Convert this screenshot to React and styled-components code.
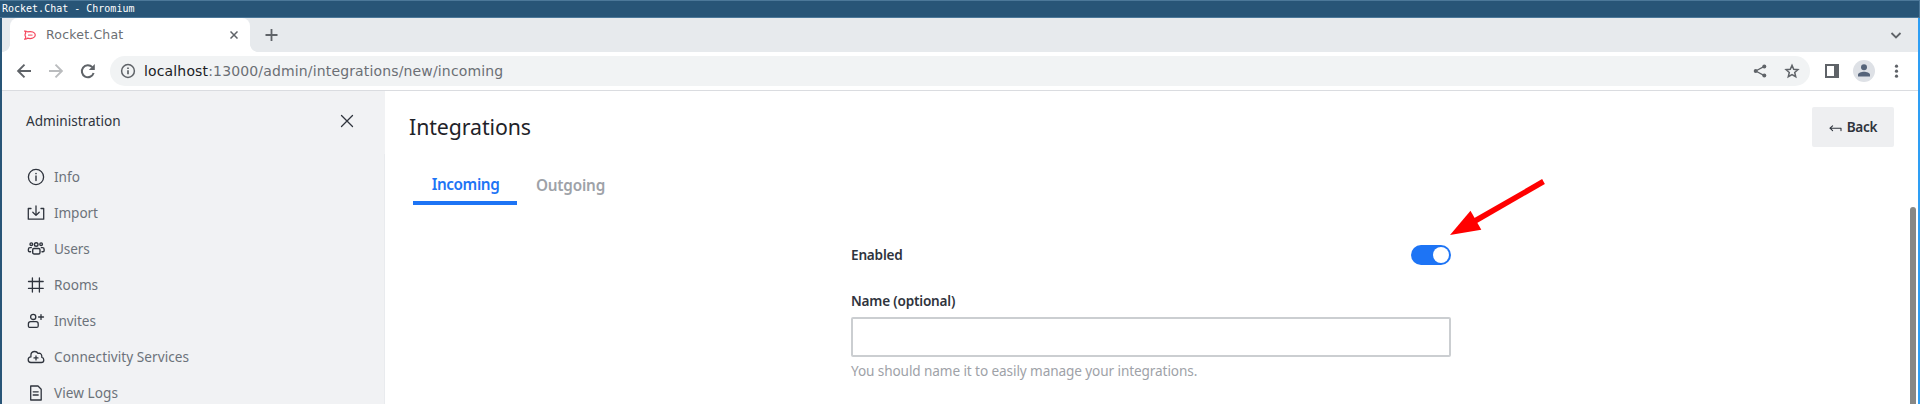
import React from "react";
import styled, { createGlobalStyle } from "styled-components";

const Global = createGlobalStyle`
  * { box-sizing: border-box; }
  html, body { margin: 0; height: 100%; overflow: hidden; background: #fff; }
  button { font: inherit; border: 0; padding: 0; background: none; }
  svg { display: block; flex: none; }
`;

const Window = styled.div`
  display: flex;
  flex-direction: column;
  height: 404px;
  width: 1920px;
  font-family: "Noto Sans", sans-serif;
  overflow: hidden;
`;

const TitleBar = styled.header`
  height: 18px;
  flex: none;
  padding-left: 2px;
  background: #285577;
  border: 1px solid #4c7899;
  border-left-width: 0;
  color: #fff;
  font: 10px/15px "DejaVu Sans Mono", monospace;
  white-space: pre;
`;

const Frame = styled.div`
  flex: 1;
  min-height: 0;
  display: flex;
  flex-direction: column;
  border-left: 2px solid #285577;
  border-right: 2px solid #2e9ef4;
`;

const TabStrip = styled.div`
  height: 34px;
  flex: none;
  display: flex;
  align-items: center;
  background: #e7eaed;
  padding: 0 15px 0 8px;
`;

const BrowserTab = styled.div`
  position: relative;
  width: 240px;
  height: 34px;
  display: flex;
  align-items: center;
  padding: 0 12px 0 14px;
  background: #fff;
  border-radius: 8px 8px 0 0;
  color: #6b6f74;
  font: 12.5px/34px "DejaVu Sans", sans-serif;
  &::before, &::after {
    content: "";
    position: absolute;
    bottom: 0;
    width: 8px;
    height: 8px;
  }
  &::before { left: -8px; background: radial-gradient(circle at 0 0, transparent 7.6px, #fff 8.2px); }
  &::after { right: -8px; background: radial-gradient(circle at 100% 0, transparent 7.6px, #fff 8.2px); }
`;

const TabTitle = styled.span`
  flex: 1;
  margin-left: 10px;
  letter-spacing: 0.2px;
`;

const NewTab = styled.button`
  margin-left: 15px;
`;

const Spacer = styled.div`
  flex: 1;
`;

const Toolbar = styled.div`
  height: 39px;
  flex: none;
  display: flex;
  align-items: center;
  padding: 0 15px 1px 12px;
  border-bottom: 1px solid #dadce0;
`;

const NavButtons = styled.div`
  display: flex;
  gap: 12px;
  margin-right: 12px;
`;

const AddressBar = styled.div`
  width: 1700px;
  height: 30px;
  display: flex;
  align-items: center;
  padding: 0 8px 0 8px;
  border-radius: 15px;
  background: #f1f3f4;
`;

const Url = styled.span`
  flex: 1;
  margin-left: 6px;
  color: #6b6f74;
  font: 14px/30px "DejaVu Sans", sans-serif;
  letter-spacing: 0.15px;
  b { font-weight: 400; color: #202124; }
`;

const AddressActions = styled.div`
  display: flex;
  gap: 12px;
`;

const Avatar = styled.div`
  width: 22px;
  height: 22px;
  margin: 0 14px;
  border-radius: 50%;
  background: #dee1e6;
  display: flex;
  align-items: center;
  justify-content: center;
`;

const Page = styled.div`
  flex: 1;
  min-height: 0;
  display: flex;
`;

const Sidebar = styled.aside`
  width: 383px;
  flex: none;
  background: #f1f2f4;
  display: flex;
  flex-direction: column;
`;

const SidebarHeader = styled.div`
  height: 63px;
  flex: none;
  display: flex;
  align-items: flex-start;
  justify-content: space-between;
  padding: 20px 30px 0 24px;
  color: #2f343d;
  font-size: 13.6px;
  line-height: 20px;
  svg { margin-top: 2px; }
`;

const Nav = styled.nav`
  flex: 1;
  padding-top: 5px;
  border-right: 1px solid #e9ebee;
`;

const NavItem = styled.a`
  height: 36px;
  display: flex;
  align-items: center;
  gap: 8px;
  padding-left: 24px;
  color: #6c727a;
  font-size: 13.6px;
  line-height: 20px;
  letter-spacing: ${(p) => p.$tracking || 0}px;
  svg { color: #2f343d; }
`;

const Main = styled.main`
  flex: 1;
  min-width: 0;
  display: flex;
  flex-direction: column;
`;

const MainHeader = styled.div`
  height: 72px;
  flex: none;
  display: flex;
  align-items: center;
  justify-content: space-between;
  padding: 0 24px;
`;

const Heading = styled.h1`
  margin: 0;
  color: #1f2329;
  font-size: 21.3px;
  font-weight: 400;
  line-height: 32px;
  letter-spacing: -0.08px;
`;

const BackButton = styled.button`
  width: 82px;
  height: 40px;
  display: flex;
  align-items: center;
  justify-content: center;
  gap: 5px;
  padding-bottom: 1px;
  border-radius: 2px;
  background: #eeeff1;
  color: #2f343d;
  font-size: 13.6px;
  font-weight: 600;
  letter-spacing: -0.25px;
  svg { margin-top: 2px; }
`;

const Tabs = styled.div`
  display: flex;
  height: 42px;
  flex: none;
  padding-left: 28px;
`;

const Tab = styled.button`
  width: ${(p) => p.$width}px;
  height: 42px;
  padding-top: ${(p) => (p.$active ? 4 : 2)}px;
  padding-left: 1px;
  border-bottom: ${(p) => (p.$active ? "4px solid #1d74f5" : "0")};
  color: ${(p) => (p.$active ? "#1d74f5" : "#9ea2a8")};
  font-size: 15.3px;
  font-weight: 600;
  letter-spacing: ${(p) => p.$tracking}px;
`;

const Body = styled.div`
  flex: 1;
  min-height: 0;
  display: flex;
  justify-content: space-between;
  align-items: stretch;
  padding: 2px 2px 0 466px;
`;

const Form = styled.form`
  width: 600px;
  padding-top: 38px;
`;

const FieldRow = styled.div`
  display: flex;
  align-items: center;
  justify-content: space-between;
  height: 20px;
  margin-bottom: 26px;
`;

const Label = styled.label`
  display: block;
  color: #2f343d;
  font-size: 13.6px;
  font-weight: 600;
  line-height: 20px;
  letter-spacing: ${(p) => p.$tracking}px;
`;

const Toggle = styled.span`
  width: 40px;
  height: 20px;
  padding: 2px;
  display: flex;
  justify-content: flex-end;
  border-radius: 10px;
  background: #1d74f5;
  &::after {
    content: "";
    width: 16px;
    height: 16px;
    border-radius: 50%;
    background: #fff;
  }
`;

const Input = styled.input`
  display: block;
  width: 600px;
  height: 40px;
  margin-top: 6px;
  border: 2px solid #cbced1;
  border-radius: 2px;
  background: #fff;
`;

const Hint = styled.div`
  padding: 4px 0 0;
  color: #9ea2a8;
  font-size: 13.6px;
  line-height: 20px;
  letter-spacing: -0.1px;
`;

const ScrollThumb = styled.div`
  width: 6px;
  border-radius: 3px 3px 0 0;
  background: #878785;
`;

const Annotation = styled.svg`
  position: absolute;
  left: 1440px;
  top: 170px;
`;

const Icon = ({ size = 20, w = 1.3, children, ...rest }) => (
  <svg width={size} height={size} viewBox="0 0 20 20" fill="none" stroke="currentColor"
    strokeWidth={w} strokeLinecap="round" strokeLinejoin="round" {...rest}>{children}</svg>
);

const icons = {
  info: <Icon><circle cx="10" cy="10" r="7.6" /><path d="M10 9v4.6" strokeWidth="1.4" /><circle cx="10" cy="6.6" r=".8" fill="currentColor" stroke="none" /></Icon>,
  import: <Icon><path d="M5 5.5H2.3v10.7h15.4V5.5H15M10 3v9.2M6.8 9.2l3.2 3.2 3.2-3.2" /></Icon>,
  users: (
    <Icon w={1.4}>
      <circle cx="5.3" cy="5.2" r="1.3" /><circle cx="10.2" cy="5.5" r="1.8" /><circle cx="15.1" cy="5.2" r="1.3" />
      <path d="M7.8 9.5h5c.8 0 1.2.6 1.2 1.4v2.6c0 .9-.6 1.5-1.5 1.5H8.2c-.9 0-1.5-.6-1.5-1.5v-2.6c0-.8.4-1.4 1.1-1.4zM5.3 8.6H4c-1 0-1.6.7-1.6 1.6v1.5c0 .7.5 1.1 1.1 1.1h1.1M15.3 8.6h1.2c1 0 1.6.7 1.6 1.6v1.5c0 .7-.5 1.1-1.1 1.1h-1" />
    </Icon>
  ),
  rooms: <Icon><path d="M6.4 3v14M13.4 3v14M2.5 6.5h14.7M2.5 13.4h14.7" /></Icon>,
  invites: <Icon><circle cx="7.2" cy="5.9" r="2.6" /><path d="M4.6 10.7h5.6c1.2 0 2 1 2 2.2v2c0 .9-.6 1.5-1.5 1.5H3.9c-.9 0-1.5-.6-1.5-1.5v-2c0-1.2.9-2.2 2.2-2.2zM15 3.6v4.8M12.6 6h4.9" /></Icon>,
  cloud: <Icon><path d="M4.9 15.5h10.4c1.5 0 2.5-1.1 2.5-2.6 0-1.3-.8-2.3-2-2.5.3-2.4-.8-4-2.5-4.2-.5 0-.9.1-1.3.2C11.3 5.1 10.1 4.5 8.8 4.5c-2.3 0-3.9 1.7-3.9 3.9v1.5C3.3 10 2.2 11.1 2.2 12.7c0 1.6 1.1 2.8 2.7 2.8zM10 8.900v4M8 10.900h4" /></Icon>,
  logs: <Icon><path d="M4.700 3h7.300l3.200 3.200V17H4.700zM7.200 8.800h5M7.200 12h5" /></Icon>,
};

const entries = [
  ["info", "Info"], ["import", "Import", -0.1], ["users", "Users", -0.1], ["rooms", "Rooms"],
  ["invites", "Invites", -0.1], ["cloud", "Connectivity Services", 0.06], ["logs", "View Logs", 0.05],
];

export default function App() {
  return (
    <Window>
      <Global />
      <TitleBar>Rocket.Chat - Chromium</TitleBar>
      <Frame>
        <TabStrip>
          <BrowserTab>
            <svg width="12" height="12" viewBox="0 0 12 12" fill="none" stroke="#f5455c">
              <path d="M.7 2c1.300 0 2.200.3 2.900.9C7.300 1.900 11.300 3.200 11.300 6s-4 4.200-7.700 3.200C2.900 9.800 2 10.200.7 10.200c.8-.8 1.200-1.500 1-2.300C.9 6.800.9 5.300 1.700 4.200 1.900 3.400 1.500 2.700.7 2z" strokeWidth="1.200" />
              <path d="M4 6.100h4.500" strokeWidth="1" />
            </svg>
            <TabTitle>Rocket.Chat</TabTitle>
            <svg width="8" height="8" viewBox="0 0 8 8" stroke="#5f6368" strokeWidth="1.500"><path d="M.5.500l7 7M7.500.5l-7 7" /></svg>
          </BrowserTab>
          <NewTab aria-label="New tab">
            <svg width="13" height="12" viewBox="0 0 13 12" stroke="#5f6368" strokeWidth="1.800"><path d="M.5 6h12M6.500 0v12" /></svg>
          </NewTab>
          <Spacer />
          <svg width="14" height="14" viewBox="0 0 14 14" fill="none" stroke="#5f6368" strokeWidth="1.800"><path d="M2.500 5L7 9.500 11.500 5" /></svg>
        </TabStrip>
        <Toolbar>
          <NavButtons>
            <Icon stroke="#5f6368" w={1.9} strokeLinecap="butt" strokeLinejoin="miter"><path d="M17 10H4.500M10.500 3.600L4.100 10l6.400 6.400" /></Icon>
            <Icon stroke="#babcbe" w={1.9} strokeLinecap="butt" strokeLinejoin="miter"><path d="M3 10h12.500M9.500 3.600l6.400 6.400-6.400 6.400" /></Icon>
            <Icon stroke="#5f6368" w={2} strokeLinecap="butt"><path d="M14.300 6.200A6 6 0 1 0 15.600 12" /><path d="M16.800 3v6h-6z" fill="#5f6368" stroke="none" /></Icon>
          </NavButtons>
          <AddressBar>
            <Icon stroke="#5f6368" w={1.5}><circle cx="10" cy="10" r="6.400" /><path d="M10 9.300v4M10 6.500v1.500" strokeLinecap="butt" strokeWidth="1.700" /></Icon>
            <Url><b>localhost</b>:13000/admin/integrations/new/incoming</Url>
            <AddressActions>
              <Icon stroke="#5f6368" w={1.3}><path d="M14.300 5.400L5.700 10l8.600 4.600" /><g fill="#5f6368" stroke="none"><circle cx="14.300" cy="5.400" r="2" /><circle cx="5.700" cy="10" r="2" /><circle cx="14.300" cy="14.600" r="2" /></g></Icon>
              <Icon stroke="#5f6368" w={1.5} strokeLinejoin="miter"><path d="M10 4.400l1.700 3.900 4.200.4-3.200 2.800 1 4.200L10 13.500l-3.700 2.200 1-4.200-3.200-2.800 4.200-.4z" /></Icon>
            </AddressActions>
          </AddressBar>
          <Spacer />
          <svg width="14" height="14" viewBox="0 0 14 14"><path fill="#5f6368" fillRule="evenodd" d="M0 0h14v14H0zM2 2v10h7V2z" /></svg>
          <Avatar>
            <svg width="12" height="13" viewBox="0 0 12 13" fill="#56647a"><circle cx="6" cy="3.200" r="3" /><path d="M0 12.500v-1.700C0 8.700 3.500 7.800 6 7.800s6 .9 6 3v1.700z" /></svg>
          </Avatar>
          <Icon fill="#5f6368" stroke="none" size={14} viewBox="0 0 14 14"><circle cx="7.500" cy="2.200" r="1.600" /><circle cx="7.500" cy="7.200" r="1.600" /><circle cx="7.500" cy="12.200" r="1.600" /></Icon>
        </Toolbar>
        <Page>
          <Sidebar>
            <SidebarHeader>
              Administration
              <svg width="16" height="16" viewBox="0 0 16 16" stroke="#2f343d" strokeWidth="1.300" strokeLinecap="round"><path d="M2.500 2.500l11 11M13.500 2.500l-11 11" /></svg>
            </SidebarHeader>
            <Nav>
              {entries.map(([icon, text, tracking]) => (
                <NavItem key={icon} $tracking={tracking}>{icons[icon]}{text}</NavItem>
              ))}
            </Nav>
          </Sidebar>
          <Main>
            <MainHeader>
              <Heading>Integrations</Heading>
              <BackButton>
                <svg width="13" height="10" viewBox="0 0 13 10" fill="none" stroke="#2f343d" strokeWidth="1.100" strokeLinecap="round" strokeLinejoin="round"><path d="M3.600 2.800L1 5.200l2.600 2.500M1 5.200h11v2.400" /></svg>
                Back
              </BackButton>
            </MainHeader>
            <Tabs>
              <Tab $active $width={104} $tracking={-0.4}>Incoming</Tab>
              <Tab $width={106} $tracking={-0.2}>Outgoing</Tab>
            </Tabs>
            <Body>
              <Form>
                <FieldRow>
                  <Label $tracking={-0.2}>Enabled</Label>
                  <Toggle role="switch" aria-checked="true" />
                </FieldRow>
                <Label $tracking={-0.2}>Name (optional)</Label>
                <Input />
                <Hint>You should name it to easily manage your integrations.</Hint>
              </Form>
              <ScrollThumb />
            </Body>
          </Main>
        </Page>
      </Frame>
      <Annotation width="110" height="70" viewBox="1440 170 110 70">
        <path d="M1543.500 181.500L1474 221.500" stroke="#f00" strokeWidth="5.500" />
        <path d="M1450 235l20.500-24.300 10.800 19z" fill="#f00" />
      </Annotation>
    </Window>
  );
}
